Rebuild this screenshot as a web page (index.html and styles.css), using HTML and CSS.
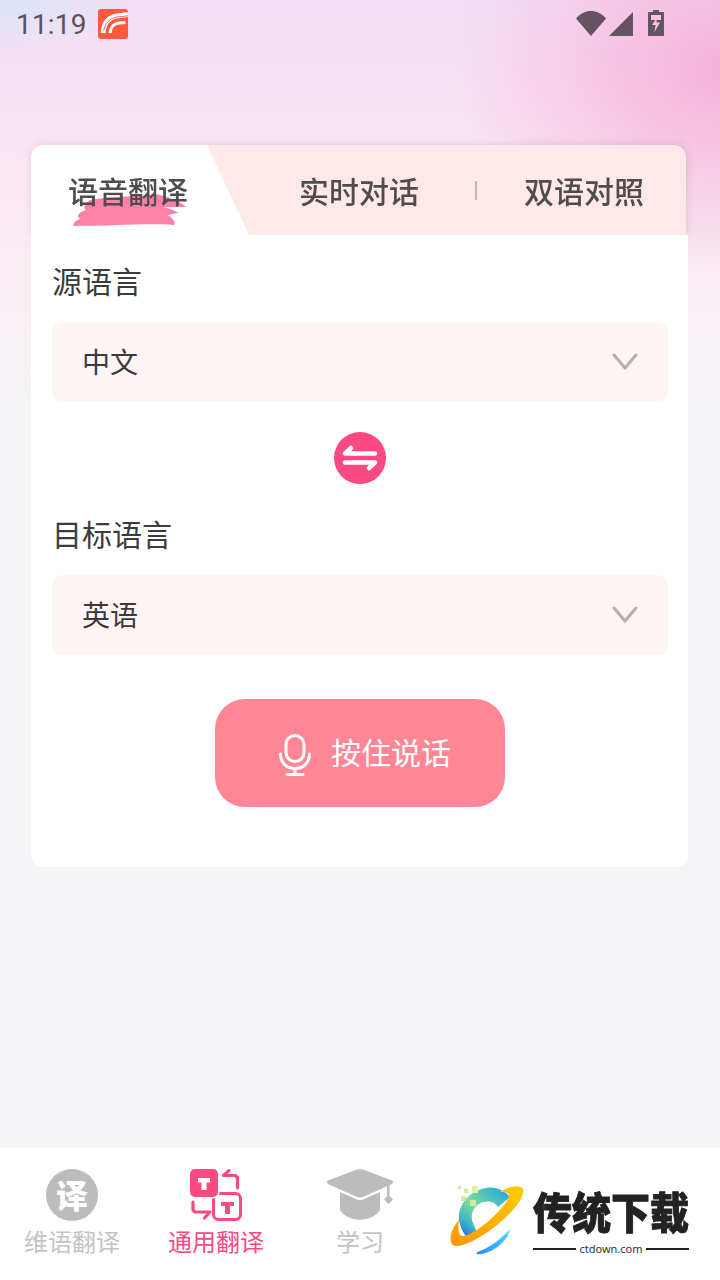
FILE: index.html
```html
<!DOCTYPE html>
<html lang="zh">
<head>
<meta charset="utf-8">
<title>语音翻译</title>
<link rel="stylesheet" href="styles.css">
</head>
<body>
<div class="app">
  <header class="status">
    <div class="status-left">
      <span class="time">11:19</span>
      <svg class="app-badge" viewBox="0 0 30 30"><rect width="30" height="30" rx="3" fill="#ff5a3e"/><path d="M5 24C6 14 11 8 19 7L30 5.500" fill="none" stroke="#fff" stroke-width="5"/><path d="M5.500 22C7 14 12 9 19.500 8L30 6.800" fill="none" stroke="#ff5a3e" stroke-width=".9"/><path d="M12 24C13 18 15 14.500 21 14L27.500 13.500" fill="none" stroke="#fff" stroke-width="3"/></svg>
    </div>
    <div class="status-right">
      <svg class="wifi" viewBox="0 0 30 25"><path d="M0 7.500C8 -2.500 22 -2.500 30 7.500L15 25Z" fill="#655361"/></svg>
      <svg class="signal" viewBox="0 0 24 24"><path d="M24 0V24H0Z" fill="#655361"/></svg>
      <svg class="battery" viewBox="0 0 16 26"><path d="M5 0H11V2H15C15.600 2 16 2.400 16 3V25C16 25.600 15.600 26 15 26H1C.4 26 0 25.600 0 25V3C0 2.400 .4 2 1 2H5Z" fill="#655361"/><path d="M3 5H13V10H3Z" fill="#f6c3de"/><path d="M9 7L4 15H7.500L6.500 22L12 12.500H8.500Z" fill="#f6c3de"/></svg>
    </div>
  </header>

  <main class="content">
    <section class="card">
      <div class="tabs">
        <div class="tab-active-bg"></div>
        <div class="tab tab-first">
          <svg class="brush" viewBox="0 0 116 34"><path d="M18 6C40 2 62 3 84 0C96 3 108 7 114 13L92 13C98 15 104 17 106 19L96 21C100 24 104 27 102 31C76 29 40 32 2 32C0 30 3 27 8 25C4 23 6 18 14 16C10 12 14 9 18 6Z" fill="#ff80a9"/></svg>
          <span class="tab-label">语音翻译</span>
        </div>
        <div class="tab tab-second"><span class="tab-label">实时对话</span></div>
        <i class="tab-divider"></i>
        <div class="tab tab-third"><span class="tab-label">双语对照</span></div>
      </div>
      <div class="form">
        <div class="field-label">源语言</div>
        <div class="select">
          <span class="select-text">中文</span>
          <svg class="chevron" viewBox="0 0 26 18"><path d="M2 2L13 15L24 2" fill="none" stroke="#b3b0b0" stroke-width="3" stroke-linecap="round" stroke-linejoin="round"/></svg>
        </div>
        <div class="swap-row">
          <svg class="swap" viewBox="0 0 52 52"><circle cx="26" cy="26" r="26" fill="#fb4a82"/><g fill="none" stroke="#fff" stroke-width="4.500" stroke-linecap="round" stroke-linejoin="round"><path d="M17 16L11 21.500H41"/><path d="M11 30.500H41L35 36"/></g></svg>
        </div>
        <div class="field-label label-second">目标语言</div>
        <div class="select">
          <span class="select-text">英语</span>
          <svg class="chevron" viewBox="0 0 26 18"><path d="M2 2L13 15L24 2" fill="none" stroke="#b3b0b0" stroke-width="3" stroke-linecap="round" stroke-linejoin="round"/></svg>
        </div>
        <button class="talk">
          <svg class="mic" viewBox="0 0 32 42"><g fill="none" stroke="#fff" stroke-width="3" stroke-linecap="round"><rect x="7" y="1.500" width="18" height="26" rx="9"/><path d="M1.500 20C1.500 29 8 34.500 16 34.500S30.500 29 30.500 20"/><path d="M16 34.500V40.500M8 40.500H24"/></g></svg>
          <span class="talk-text">按住说话</span>
        </button>
      </div>
    </section>
  </main>

  <nav class="nav">
    <div class="nav-item">
      <span class="yi-icon">译</span>
      <span class="nav-label">维语翻译</span>
    </div>
    <div class="nav-item nav-on">
      <svg class="nav-icon" viewBox="0 0 52 52">
        <rect x="23.500" y="24.500" width="27" height="26" rx="5" fill="none" stroke="#fb4a82" stroke-width="3"/>
        <rect x="-1.500" y="-1.500" width="31" height="31" rx="6" fill="#fff"/>
        <rect width="28" height="28" rx="5" fill="#fb4a82"/>
        <path d="M8 9H20V13.500H16.500V21H11.500V13.500H8Z" fill="#fff"/>
        <path d="M31 33H44V37H40V45H35V37H31Z" fill="#fb4a82"/>
        <g fill="none" stroke="#fb4a82" stroke-width="3.200" stroke-linecap="round" stroke-linejoin="round"><path d="M39 1.500L33.500 6.500H45.500L47.500 8.500V19"/><path d="M3 33V41L5 43H20L14.500 49"/></g>
      </svg>
      <span class="nav-label">通用翻译</span>
    </div>
    <div class="nav-item">
      <svg class="nav-icon cap" viewBox="0 0 68 52">
        <path d="M31 .5Q34 -.5 37 .5L66 11.500Q68 13 66 15L37 28Q34 29 31 28L2 15Q0 13 2 11.500Z" fill="#bcbcbc"/>
        <path d="M14 23L31 30.500Q34 32 37 30.500L54 23V41C46 54 22 54 14 41Z" fill="#bcbcbc"/>
        <path d="M61 15H63.500V27L67 30.500L62.500 35L58 30.500L61 27Z" fill="#bcbcbc"/>
      </svg>
      <span class="nav-label">学习</span>
    </div>
    <div class="watermark">
      <svg class="wm-icon" viewBox="0 0 74 70">
        <defs>
          <linearGradient id="cg" x1="0.900" y1="0" x2="0.100" y2="1"><stop offset="0" stop-color="#1fa6e0"/><stop offset="0.500" stop-color="#7bdc9a"/><stop offset="0.750" stop-color="#45b8c8"/><stop offset="1" stop-color="#1c66e8"/></linearGradient>
          <linearGradient id="og" x1="1" y1="0" x2="0" y2="1"><stop offset="0" stop-color="#ffcc00"/><stop offset="1" stop-color="#ff9500"/></linearGradient>
          <linearGradient id="bg" x1="1" y1="0" x2="0" y2="1"><stop offset="0" stop-color="#4fdcff"/><stop offset="1" stop-color="#2a8cff"/></linearGradient>
        </defs>
        <path d="M36 2C46 0 56 6 60 11L48 21C44 15 36 14 29 18C22 23 20 30 23 37L29 51L20 54C12 48 8 36 9 28C11 15 22 4 36 2Z" fill="url(#cg)"/>
        <path d="M50 6C60 0 70 -2 73 3C76 10 62 28 42 43C24 56 6 64 2 58C-2 52 3 40 9 34C8 42 8 50 13 50C22 49 36 38 45 29C54 20 60 12 59 8C57 6 54 6 50 6Z" fill="url(#og)"/>
        <path d="M60 43C58 54 46 65 32 68C26 69 24 67 30 65C42 60 52 52 60 43Z" fill="url(#bg)"/>
        <g fill="#cdeb9b"><rect x="8" y="0" width="3" height="3"/><rect x="14" y="3" width="4" height="4"/><rect x="22" y="0" width="6" height="7" fill="#e6f0a0"/><rect x="11" y="10" width="5" height="5"/><rect x="20" y="14" width="6" height="6"/></g>
      </svg>
      <div class="wm-text">
        <div class="wm-title">传统下载</div>
        <div class="wm-sub"><i></i><span>ctdown.com</span><i></i></div>
      </div>
    </div>
  </nav>
</div>
</body>
</html>
```

FILE: styles.css
```css
* { box-sizing: border-box; }
html, body { margin: 0; padding: 0; }
body { font-family: "Noto Sans CJK SC", "Noto Sans", sans-serif; color: #3a3a3a; }

.app {
  width: 720px;
  height: 1280px;
  display: flex;
  flex-direction: column;
  background:
    radial-gradient(ellipse 270px 210px at 725px 70px, rgba(245,165,208,.8), rgba(245,165,208,0) 100%),
    radial-gradient(ellipse 130px 55px at 0 0, rgba(215,228,250,.95), rgba(215,228,250,0) 100%),
    linear-gradient(180deg, #f2e0f4 0, #f9e2f3 90px, #fae9f2 200px, #f8eff4 300px, #f5f5f7 430px);
}

.status {
  height: 50px;
  flex: none;
  display: flex;
  justify-content: space-between;
  padding: 9px 56px 0 16px;
}
.status-left { display: flex; gap: 11px; align-items: flex-start; }
.time { font: 400 28px/32px Roboto, sans-serif; color: #5c5258; letter-spacing: .2px; }
.app-badge { width: 30px; height: 30px; }
.status-right { display: flex; align-items: flex-start; }
.wifi { width: 30px; height: 25px; margin-top: 2px; }
.signal { width: 24px; height: 24px; margin: 3px 0 0 3px; }
.battery { width: 16px; height: 26px; margin: 1px 0 0 15px; }

.content { flex: 1; padding: 95px 32px 0 31px; }
.card { width: 657px; }

.tabs {
  position: relative;
  height: 90px;
  width: 655px;
  display: flex;
  align-items: center;
  background: #ffe8e9;
  border-radius: 12px 12px 0 0;
  box-shadow: 0 -1px 8px rgba(120,90,100,.12), 2px 0 6px rgba(120,90,100,.06);
  overflow: hidden;
  font-size: 30px;
  color: #504c4c;
}
.tab-active-bg {
  position: absolute;
  inset: 0 auto 0 0;
  width: 218px;
  background: #fff;
  clip-path: polygon(0 0, 176px 0, 218px 100%, 0 100%);
  border-top-left-radius: 12px;
}
.tab { position: relative; line-height: 40px; }
.tab-label { position: relative; filter: blur(.35px); display: block; font-weight: 500; }
.tab-first { margin: 0 0 0 37px; width: 120px; }
.tab-second { margin: 0 0 0 111px; width: 120px; }
.tab-third { margin: 0 0 0 47px; width: 120px; }
.tab-divider { width: 2px; height: 19px; margin: 0 0 0 56px; background: #bdb6b6; }
.brush { position: absolute; left: 4px; top: 24px; width: 116px; height: 34px; }

.form {
  position: relative;
  background: #fff;
  border-radius: 0 0 12px 12px;
  padding: 25px 20px 60px 21px;
  display: flex;
  flex-direction: column;
}
.field-label { font-size: 30px; line-height: 40px; color: #3c3c3c; margin-bottom: 22px; }
.label-second { margin-top: 29px; }

.select {
  height: 80px;
  background: #fff5f4;
  border-radius: 10px;
  padding: 0 30px 0 30px;
  display: flex;
  align-items: center;
  justify-content: space-between;
}
.select-text { font-size: 28px; line-height: 38px; margin-top: -2px; color: #3a3a3a; }
.chevron { width: 26px; height: 18px; }

.swap-row { display: flex; justify-content: center; margin-top: 30px; }
.swap { width: 52px; height: 52px; }

.talk {
  align-self: center;
  width: 290px;
  height: 108px;
  margin-top: 44px;
  padding: 0 0 0 10px;
  border: 0;
  border-radius: 30px;
  background: #ff8695;
  color: #fff;
  display: flex;
  align-items: center;
  justify-content: center;
  gap: 20px;
  font: 400 30px "Noto Sans CJK SC", sans-serif;
}
.talk-text { margin-top: -4px; }
.mic { width: 32px; height: 42px; margin-top: 4px; }

.nav {
  position: relative;
  flex: none;
  height: 132px;
  background: #fff;
  display: flex;
  padding-top: 21px;
}
.nav-item {
  width: 144px;
  display: flex;
  flex-direction: column;
  align-items: center;
  color: #c3c3c3;
}
.nav-on { color: #fb4a82; }
.nav-label { font-size: 24px; line-height: 34px; margin-top: 3px; }
.nav-icon { width: 52px; height: 52px; display: block; }
.cap { width: 68px; }
.yi-icon {
  width: 52px;
  height: 52px;
  border-radius: 50%;
  background: #bcbcbc;
  color: #fff;
  font-size: 32px;
  font-weight: 900;
  line-height: 50px;
  text-align: center;
}

.watermark {
  position: absolute;
  left: 450px;
  top: 38px;
  display: flex;
  align-items: flex-start;
}
.wm-icon { width: 74px; height: 70px; }
.wm-text { margin: 0 0 0 9px; width: 156px; }
.wm-title {
  font-size: 39px;
  font-weight: 900;
  line-height: 48px;
  color: #222;
  white-space: nowrap;
  transform: scaleY(1.1);
  -webkit-text-stroke: .8px #222;
}
.wm-sub {
  display: flex;
  align-items: center;
  gap: 3px;
  font: 400 11px/14px "Noto Sans", sans-serif;
  color: #333;
  margin-top: 8px;
  white-space: nowrap;
}
.wm-sub i { flex: 1; height: 2px; background: #222; }
```
